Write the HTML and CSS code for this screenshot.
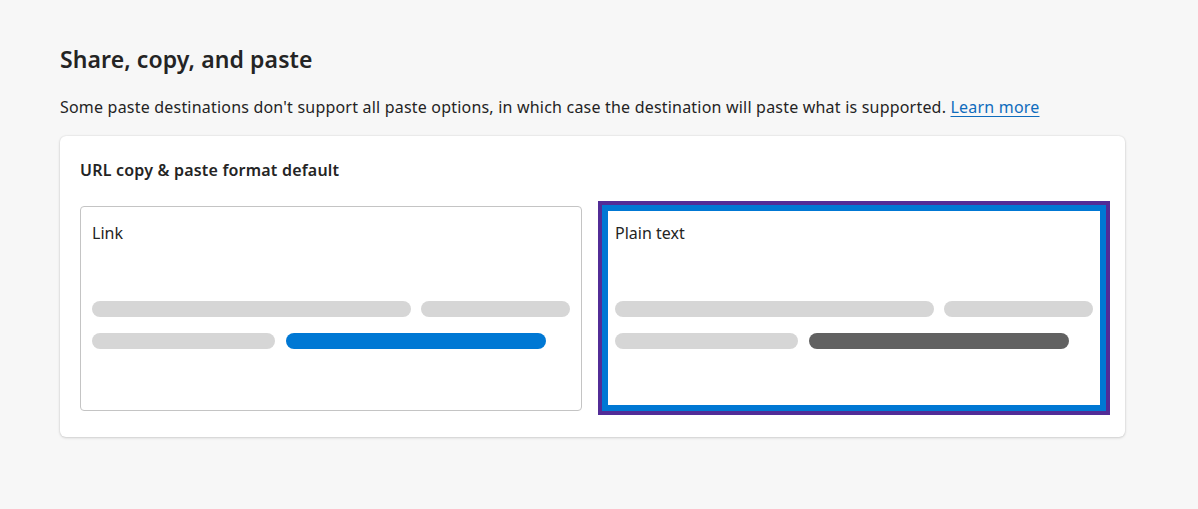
FILE: index.html
```html
<!DOCTYPE html>
<html>
<head>
<meta charset="utf-8">
<link rel="stylesheet" href="styles.css">
</head>
<body>
<main class="page">
  <h1 class="title">Share, copy, and paste</h1>
  <p class="desc">Some paste destinations don't support all paste options, in which case the destination will paste what is supported. <a class="learn" href="#">Learn more</a></p>
  <section class="panel">
    <h2 class="panel-title">URL copy &amp; paste format default</h2>
    <div class="options">
      <div class="option">
        <div class="option-label">Link</div>
        <div class="bars">
          <div class="row">
            <span class="bar b1"></span><span class="bar b2"></span>
          </div>
          <div class="row">
            <span class="bar b3"></span><span class="bar b4 blue"></span>
          </div>
        </div>
      </div>
      <div class="option selected">
        <div class="option-label">Plain text</div>
        <div class="bars">
          <div class="row">
            <span class="bar b1"></span><span class="bar b2"></span>
          </div>
          <div class="row">
            <span class="bar b3"></span><span class="bar b4 dark"></span>
          </div>
        </div>
      </div>
    </div>
  </section>
</main>
</body>
</html>
```

FILE: styles.css
```css
* { box-sizing: border-box; }
html, body { margin: 0; padding: 0; }
body {
  background: #f7f7f7;
  font-family: "Segoe UI", "Noto Sans", "Open Sans", sans-serif;
  color: #242424;
  width: 1198px;
  height: 509px;
  overflow: hidden;
}
.page {
  padding: 44px 73px 0 60px;
}
.title {
  margin: 0;
  font-size: 23px;
  line-height: 30px;
  font-weight: 600;
  letter-spacing: 0.1px;
  color: #242424;
}
.desc {
  margin: 22px 0 0 0;
  font-size: 16px;
  line-height: 22px;
  letter-spacing: 0.2px;
  color: #242424;
  white-space: nowrap;
}
.learn {
  color: #0f6cbd;
  text-decoration: underline;
  text-underline-offset: 3px;
}
.panel {
  margin-top: 18px;
  width: 1065px;
  background: #ffffff;
  border-radius: 6px;
  box-shadow: 0 0 2px rgba(0,0,0,0.12), 0 1px 3px rgba(0,0,0,0.14);
  padding: 20px 20px 26px 20px;
}
.panel-title {
  margin: 0;
  font-size: 16px;
  line-height: 28px;
  font-weight: 600;
  letter-spacing: 0.2px;
  color: #242424;
}
.options {
  margin-top: 22px;
  display: flex;
  gap: 21px;
}
.option {
  width: 502px;
  height: 205px;
  border: 1px solid #c4c4c4;
  border-radius: 4px;
  padding: 15px 11px 0 11px;
}
.option.selected {
  height: 204px;
  border-color: #0078d4;
  border-radius: 0;
  box-shadow: inset 0 0 0 4px #0078d4, 0 0 0 1px #0078d4;
  outline: 4px solid #522c97;
  outline-offset: 1px;
}
.option-label {
  font-size: 16px;
  line-height: 22px;
  color: #242424;
}
.bars {
  margin-top: 57px;
  display: flex;
  flex-direction: column;
  gap: 16px;
}
.row {
  display: flex;
  gap: 10px;
}
.bar {
  display: block;
  height: 16px;
  border-radius: 8px;
  background: #d6d6d6;
}
.b1 { width: 319px; }
.b2 { width: 149px; }
.b3 { width: 183px; }
.b4 { width: 260px; margin-left: 1px; }
.bar.blue { background: #0078d4; }
.bar.dark { background: #616161; }
```
